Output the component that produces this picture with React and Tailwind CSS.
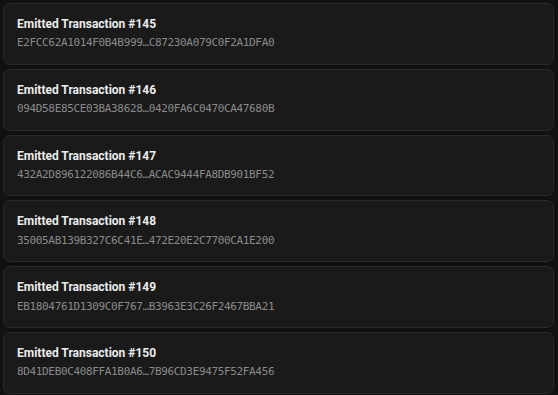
import React from "react";

const items = [
  ["145", "E2FCC62A1014F0B4B999…C87230A079C0F2A1DFA0"],
  ["146", "094D58E85CE03BA38628…0420FA6C0470CA47680B"],
  ["147", "432A2D896122086B44C6…ACAC9444FA8DB901BF52"],
  ["148", "35005AB139B327C6C41E…472E20E2C7700CA1E200"],
  ["149", "EB1804761D1309C0F767…B3963E3C26F2467BBA21"],
  ["150", "8D41DEB0C408FFA1B0A6…7B96CD3E9475F52FA456"],
];

export default function App() {
  return (
    <div className="w-[558px] h-[395px] bg-[#111111] overflow-hidden pl-[3px] pr-[4px] pt-[3px] flex flex-col gap-[4px]">
      {items.map(([n, h]) => (
        <div
          key={n}
          className="bg-[#1a1a1a] border border-[#2a2a2a] rounded-[7px] pl-[13px] pr-3 pt-3 pb-[12.4px] flex flex-col"
        >
          <div
            className="text-[12px] leading-4 font-bold text-[#ececec]"
            style={{ fontFamily: "Roboto, 'Noto Sans', sans-serif" }}
          >
            Emitted Transaction #{n}
          </div>
          <div
            className="mt-[3.4px] text-[11px] leading-4 tracking-[-0.35px] text-[#8a8a8a]"
            style={{ fontFamily: "'DejaVu Sans Mono', monospace" }}
          >
            {h}
          </div>
        </div>
      ))}
    </div>
  );
}
